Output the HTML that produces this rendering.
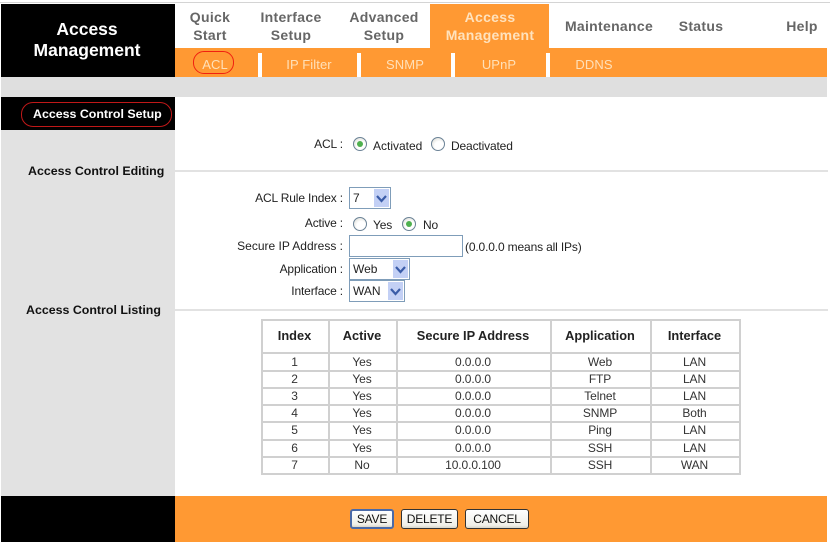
<!DOCTYPE html>
<html><head><meta charset="utf-8"><style>
html,body{margin:0;padding:0;width:830px;height:543px;overflow:hidden;background:#fff}
body{font-family:"Liberation Sans",sans-serif;font-size:12px;color:#222}
#w{position:relative;width:830px;height:543px;filter:blur(.35px)}
.a{position:absolute}
.t{position:absolute;white-space:nowrap;line-height:14px}
.c{text-align:center;transform:translateX(-50%)}
.r{text-align:right;transform:translateX(-100%)}
.nav{font-weight:bold;font-size:14px;color:#666;line-height:17.5px;letter-spacing:.3px}
.sub{color:#ffe0b8;font-size:13px;letter-spacing:.1px}
.sep{position:absolute;top:53px;width:4px;height:24px;background:#fff}
.radio{position:absolute;width:12px;height:12px;border:1px solid #6b8296;border-radius:50%;background:radial-gradient(circle at 60% 65%,#fff 40%,#d4d4cc)}
.radio.on::after{content:"";position:absolute;left:3px;top:3px;width:6px;height:6px;border-radius:50%;background:#4fb04f}
.sel{position:absolute;box-sizing:border-box;border:1px solid #7f9db9;background:#fff;height:22px;font-size:12px;line-height:20px;padding-left:3px}
.sel i{position:absolute;right:1px;top:1px;bottom:1px;width:15px;background:#c3d0f5}
.sel svg{position:absolute;right:3px;top:7px}
.btn{position:absolute;box-sizing:border-box;top:509px;height:20px;border:1px solid #333;border-radius:3px;background:linear-gradient(#fff,#f0efe8 85%,#d8d5c8);font-size:12px;line-height:18px;text-align:center;color:#111;letter-spacing:-.2px}
table{position:absolute;left:261px;top:319px;width:480px;height:156px;border-collapse:collapse;table-layout:fixed;border:2px solid #d0d0d0;font-size:12px;color:#333;letter-spacing:-.1px}
td,th{border:2px solid #d0d0d0;padding:0 2px 1px 0;text-align:center;line-height:12px}
th{font-size:12.8px;color:#222;height:30px;letter-spacing:0;line-height:14px}
td{height:14px}
.s{font-size:12px;letter-spacing:-.15px}
</style></head><body><div id="w">
<div class="a" style="left:0;top:2px;width:830px;height:1px;background:#d4d4d4"></div>
<div class="a" style="left:1px;top:4px;width:174px;height:73px;background:#000"></div>
<div class="a" style="left:430px;top:4px;width:119px;height:44px;background:#f93"></div>
<div class="a" style="left:175px;top:48px;width:652px;height:29px;background:#f93"></div>
<div class="a" style="left:1px;top:77px;width:826px;height:20px;background:#dfdfdf"></div>
<div class="a" style="left:1px;top:97px;width:174px;height:33px;background:#000"></div>
<div class="a" style="left:1px;top:130px;width:174px;height:366px;background:#e2e2e2"></div>
<div class="a" style="left:1px;top:496px;width:174px;height:46px;background:#000"></div>
<div class="a" style="left:175px;top:496px;width:652px;height:46px;background:#f93"></div>
<div class="a" style="left:175px;top:170px;width:653px;height:2px;background:#e2e2e2"></div>
<div class="a" style="left:175px;top:309px;width:653px;height:2px;background:#e2e2e2"></div>

<div class="t c" style="left:87px;top:19px;color:#fff;font-weight:bold;font-size:17.5px;line-height:21px;">Access<br>Management</div>
<div class="t c nav" style="left:210px;top:9px">Quick<br>Start</div>
<div class="t c nav" style="left:291px;top:9px">Interface<br>Setup</div>
<div class="t c nav" style="left:384px;top:9px">Advanced<br>Setup</div>
<div class="t c nav" style="left:490px;top:9px;color:#ffe2bd">Access<br>Management</div>
<div class="t c nav" style="left:609px;top:18px">Maintenance</div>
<div class="t c nav" style="left:701px;top:18px">Status</div>
<div class="t c nav" style="left:802px;top:18px">Help</div>

<div class="a" style="left:193px;top:51px;width:39px;height:21px;border:1px solid #f02010;border-radius:11px"></div>
<div class="t c sub" style="left:215px;top:58px">ACL</div>
<div class="t c sub" style="left:309px;top:58px">IP Filter</div>
<div class="t c sub" style="left:405px;top:58px">SNMP</div>
<div class="t c sub" style="left:499px;top:58px">UPnP</div>
<div class="t c sub" style="left:594px;top:58px">DDNS</div>
<div class="sep" style="left:258px"></div><div class="sep" style="left:357px"></div>
<div class="sep" style="left:451px"></div><div class="sep" style="left:546px"></div>

<div class="a" style="left:21px;top:102px;width:149px;height:23px;border:1px solid #c01818;border-radius:12px"></div>
<div class="t" style="left:33px;top:107px;color:#fff;font-weight:bold;font-size:12.4px">Access Control Setup</div>
<div class="t" style="left:28px;top:164px;color:#111;font-weight:bold;font-size:12.4px">Access Control Editing</div>
<div class="t" style="left:26px;top:303px;color:#111;font-weight:bold;font-size:12.4px">Access Control Listing</div>

<div class="t r s" style="left:343px;top:137px">ACL :</div>
<div class="radio on" style="left:353px;top:137px"></div>
<div class="t s" style="left:373px;top:139px;letter-spacing:0">Activated</div>
<div class="radio" style="left:431px;top:137px"></div>
<div class="t s" style="left:451px;top:139px">Deactivated</div>

<div class="t r s" style="left:343px;top:191px">ACL Rule Index :</div>
<div class="sel" style="left:349px;top:187px;width:42px">7<i></i><svg width="11" height="8"><path d="M1 1L5.5 6L10 1" fill="none" stroke="#3a5ca8" stroke-width="2.2"/></svg></div>
<div class="t r s" style="left:343px;top:216px">Active :</div>
<div class="radio" style="left:353px;top:217px"></div>
<div class="t s" style="left:373px;top:218px">Yes</div>
<div class="radio on" style="left:402px;top:217px"></div>
<div class="t s" style="left:423px;top:218px">No</div>
<div class="t r s" style="left:343px;top:239px;letter-spacing:0">Secure IP Address :</div>
<div class="a" style="left:349px;top:235px;width:112px;height:20px;border:1px solid #7f9db9;background:#fff"></div>
<div class="t s" style="left:465px;top:240px">(0.0.0.0 means all IPs)</div>
<div class="t r s" style="left:343px;top:262px">Application :</div>
<div class="sel" style="left:349px;top:258px;width:61px">Web<i></i><svg width="11" height="8"><path d="M1 1L5.5 6L10 1" fill="none" stroke="#3a5ca8" stroke-width="2.2"/></svg></div>
<div class="t r s" style="left:343px;top:284px">Interface :</div>
<div class="sel" style="left:349px;top:280px;width:56px">WAN<i></i><svg width="11" height="8"><path d="M1 1L5.5 6L10 1" fill="none" stroke="#3a5ca8" stroke-width="2.2"/></svg></div>

<table>
<colgroup><col style="width:67px"><col style="width:68px"><col style="width:154px"><col style="width:100px"><col style="width:89px"></colgroup>
<tr><th>Index</th><th>Active</th><th>Secure IP Address</th><th>Application</th><th>Interface</th></tr>
<tr><td>1</td><td>Yes</td><td>0.0.0.0</td><td>Web</td><td>LAN</td></tr>
<tr><td>2</td><td>Yes</td><td>0.0.0.0</td><td>FTP</td><td>LAN</td></tr>
<tr><td>3</td><td>Yes</td><td>0.0.0.0</td><td>Telnet</td><td>LAN</td></tr>
<tr><td>4</td><td>Yes</td><td>0.0.0.0</td><td>SNMP</td><td>Both</td></tr>
<tr><td>5</td><td>Yes</td><td>0.0.0.0</td><td>Ping</td><td>LAN</td></tr>
<tr><td>6</td><td>Yes</td><td>0.0.0.0</td><td>SSH</td><td>LAN</td></tr>
<tr><td>7</td><td>No</td><td>10.0.0.100</td><td>SSH</td><td>WAN</td></tr>
</table>

<div class="btn" style="left:350px;width:44px;border:2px solid #4a6aa8;line-height:16px">SAVE</div>
<div class="btn" style="left:401px;width:57px">DELETE</div>
<div class="btn" style="left:465px;width:64px">CANCEL</div>
</div></body></html>
